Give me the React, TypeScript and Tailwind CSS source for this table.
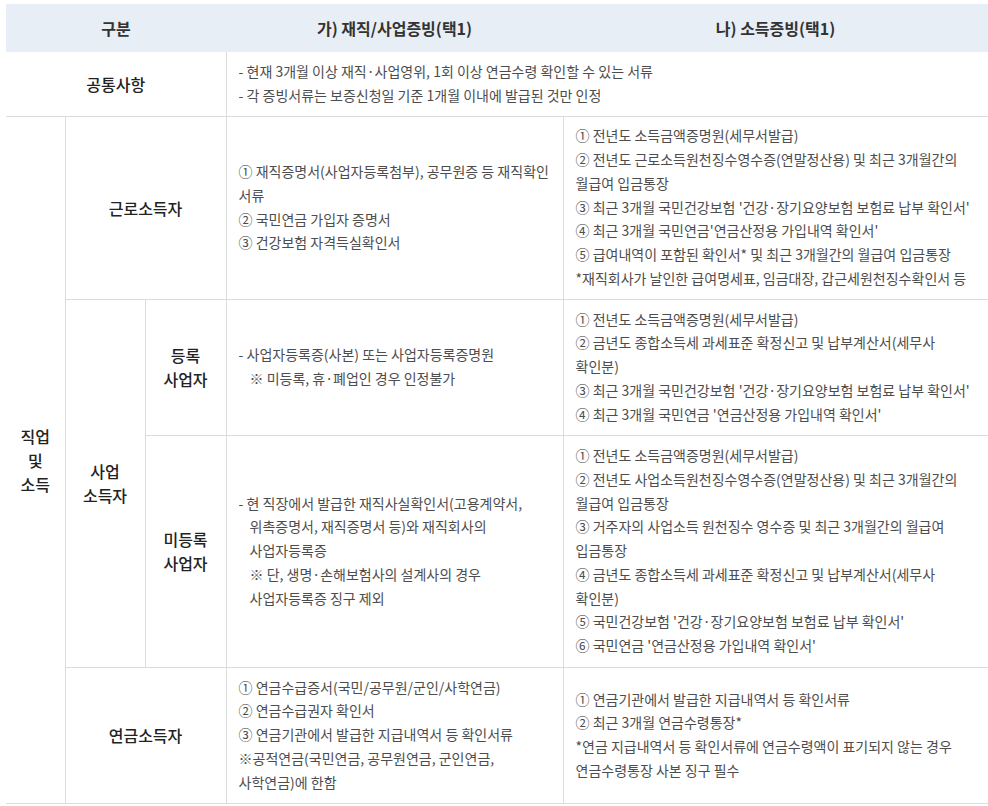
const font = "font-['Noto_Sans_CJK_KR','Noto_Sans',sans-serif]"

type Line = { text: string; indent?: boolean }

function Lines({ lines }: { lines: Line[] }) {
  return (
    <div className="pl-3 pr-1 text-left text-[14px] leading-[23.75px] text-[#4d4d4d]">
      {lines.map((l, i) => (
        <div key={i} className={l.indent ? 'whitespace-nowrap pl-[11px]' : 'whitespace-nowrap'}>
          {l.text}
        </div>
      ))}
    </div>
  )
}

const t = (s: string): Line => ({ text: s })
const ind = (s: string): Line => ({ text: s, indent: true })

const label = 'text-center align-middle text-[16px] leading-[24px] font-medium text-[#222]'
const bd = 'border-b border-r border-[#dcdcdc]'
const bdB = 'border-b border-[#dcdcdc]'
const head = 'text-[16px] font-bold text-[#333]'

export default function App() {
  return (
    <div className={`${font} bg-white min-h-[806px] pl-[6px] pt-[4px]`}>
      <table className="table-fixed border-collapse w-[982px]">
        <colgroup>
          <col className="w-[59px]" />
          <col className="w-[80px]" />
          <col className="w-[81px]" />
          <col className="w-[337px]" />
          <col className="w-[425px]" />
        </colgroup>
        <thead>
          <tr className="h-[48px] bg-[#e8eef6]">
            <th colSpan={3} className={head}>구분</th>
            <th className={head}>가) 재직/사업증빙(택1)</th>
            <th className={head}>나) 소득증빙(택1)</th>
          </tr>
        </thead>
        <tbody>
          <tr className="h-[64px]">
            <td colSpan={3} className={`${label} ${bd}`}>공통사항</td>
            <td colSpan={2} className={`${bdB} align-middle`}>
              <Lines
                lines={[
                  t('- 현재 3개월 이상 재직·사업영위, 1회 이상 연금수령 확인할 수 있는 서류'),
                  t('- 각 증빙서류는 보증신청일 기준 1개월 이내에 발급된 것만 인정'),
                ]}
              />
            </td>
          </tr>

          <tr className="h-[183px]">
            <td rowSpan={4} className={`${label} ${bd}`}>
              직업
              <br />및<br />
              소득
            </td>
            <td colSpan={2} className={`${label} ${bd}`}>근로소득자</td>
            <td className={`${bd} align-middle`}>
              <Lines
                lines={[
                  t('① 재직증명서(사업자등록첨부), 공무원증 등 재직확인'),
                  t('서류'),
                  t('② 국민연금 가입자 증명서'),
                  t('③ 건강보험 자격득실확인서'),
                ]}
              />
            </td>
            <td className={`${bdB} align-middle`}>
              <Lines
                lines={[
                  t('① 전년도 소득금액증명원(세무서발급)'),
                  t('② 전년도 근로소득원천징수영수증(연말정산용) 및 최근 3개월간의'),
                  t('월급여 입금통장'),
                  t("③ 최근 3개월 국민건강보험 '건강·장기요양보험 보험료 납부 확인서'"),
                  t("④ 최근 3개월 국민연금'연금산정용 가입내역 확인서'"),
                  t('⑤ 급여내역이 포함된 확인서* 및 최근 3개월간의 월급여 입금통장'),
                  t('*재직회사가 날인한 급여명세표, 임금대장, 갑근세원천징수확인서 등'),
                ]}
              />
            </td>
          </tr>

          <tr className="h-[136px]">
            <td rowSpan={2} className={`${label} ${bd}`}>
              사업
              <br />
              소득자
            </td>
            <td className={`${label} ${bd}`}>
              등록
              <br />
              사업자
            </td>
            <td className={`${bd} align-middle`}>
              <Lines
                lines={[t('- 사업자등록증(사본) 또는 사업자등록증명원'), ind('※ 미등록, 휴·폐업인 경우 인정불가')]}
              />
            </td>
            <td className={`${bdB} align-middle`}>
              <Lines
                lines={[
                  t('① 전년도 소득금액증명원(세무서발급)'),
                  t('② 금년도 종합소득세 과세표준 확정신고 및 납부계산서(세무사'),
                  t('확인분)'),
                  t("③ 최근 3개월 국민건강보험 '건강·장기요양보험 보험료 납부 확인서'"),
                  t("④ 최근 3개월 국민연금 '연금산정용 가입내역 확인서'"),
                ]}
              />
            </td>
          </tr>

          <tr className="h-[232px]">
            <td className={`${label} ${bd}`}>
              미등록
              <br />
              사업자
            </td>
            <td className={`${bd} align-middle`}>
              <Lines
                lines={[
                  t('- 현 직장에서 발급한 재직사실확인서(고용계약서,'),
                  ind('위촉증명서, 재직증명서 등)와 재직회사의'),
                  ind('사업자등록증'),
                  ind('※ 단, 생명·손해보험사의 설계사의 경우'),
                  ind('사업자등록증 징구 제외'),
                ]}
              />
            </td>
            <td className={`${bdB} align-middle`}>
              <Lines
                lines={[
                  t('① 전년도 소득금액증명원(세무서발급)'),
                  t('② 전년도 사업소득원천징수영수증(연말정산용) 및 최근 3개월간의'),
                  t('월급여 입금통장'),
                  t('③ 거주자의 사업소득 원천징수 영수증 및 최근 3개월간의 월급여'),
                  t('입금통장'),
                  t('④ 금년도 종합소득세 과세표준 확정신고 및 납부계산서(세무사'),
                  t('확인분)'),
                  t("⑤ 국민건강보험 '건강·장기요양보험 보험료 납부 확인서'"),
                  t("⑥ 국민연금 '연금산정용 가입내역 확인서'"),
                ]}
              />
            </td>
          </tr>

          <tr className="h-[136px]">
            <td colSpan={2} className={`${label} ${bd}`}>연금소득자</td>
            <td className={`${bd} align-middle`}>
              <Lines
                lines={[
                  t('① 연금수급증서(국민/공무원/군인/사학연금)'),
                  t('② 연금수급권자 확인서'),
                  t('③ 연금기관에서 발급한 지급내역서 등 확인서류'),
                  t('※공적연금(국민연금, 공무원연금, 군인연금,'),
                  t('사학연금)에 한함'),
                ]}
              />
            </td>
            <td className={`${bdB} align-middle`}>
              <Lines
                lines={[
                  t('① 연금기관에서 발급한 지급내역서 등 확인서류'),
                  t('② 최근 3개월 연금수령통장*'),
                  t('*연금 지급내역서 등 확인서류에 연금수령액이 표기되지 않는 경우'),
                  t('연금수령통장 사본 징구 필수'),
                ]}
              />
            </td>
          </tr>
        </tbody>
      </table>
    </div>
  )
}
